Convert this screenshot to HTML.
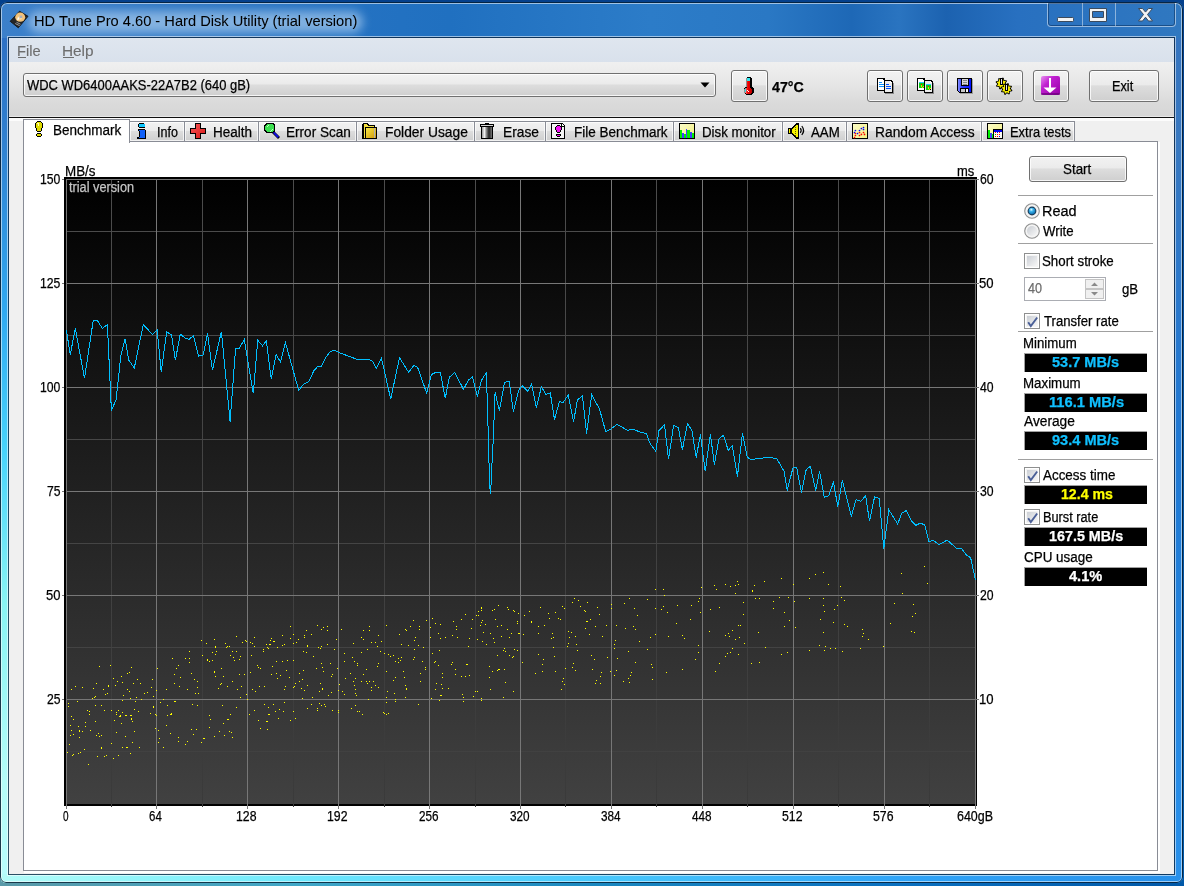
<!DOCTYPE html><html><head><meta charset="utf-8"><style>html,body{margin:0;padding:0}body{width:1184px;height:886px;overflow:hidden;position:relative;background:linear-gradient(#04408c,#02489a 20%,#03529f 50%,#0058a8)}.abs{position:absolute}.t{position:absolute;white-space:nowrap;font-family:"Liberation Sans", sans-serif;-webkit-text-stroke:0.25px currentColor}</style></head><body><div class="abs" style="left:0;top:880px;width:1184px;height:6px;background:linear-gradient(90deg,#5a9aa8 0%,#40a8c8 25%,#1a88c0 50%,#0a70c0 76%,#0058a8 100%)"></div><div class="abs" style="left:0;top:2px;width:1183px;height:881px;border-radius:7px 7px 6px 6px;overflow:hidden"><div class="abs" style="left:0;top:0;width:1183px;height:36px;background:linear-gradient(90deg,#3c80ca 0%,#3078c4 15%,#2472c2 30%,#2070c0 38%,#2c7cc8 55%,#2a78c4 65%,#1e68b6 72%,#2a74c0 76%,#1c62b0 80%,#2870c0 86%,#3078c0 100%)"></div><div class="abs" style="left:0;top:36px;width:9px;height:845px;background:linear-gradient(#2c70c4 0%,#3080d0 12%,#30a8f0 32%,#48d4fc 49%,#88f4f4 67%,#b4fcf8 88%,#b8fcfc 100%)"></div><div class="abs" style="left:1174px;top:36px;width:9px;height:845px;background:linear-gradient(#3474c0 0%,#3878c0 12%,#2a78cc 30%,#1e78d4 49%,#2282dc 70%,#268ce8 88%,#2890ea 100%)"></div><div class="abs" style="left:0;top:872px;width:1183px;height:9px;background:linear-gradient(90deg,#b4fcf8 0%,#90f4fa 12%,#6ee8fc 25%,#48c8fc 50%,#30a4f8 76%,#2890ea 100%)"></div><div class="abs" style="left:28px;top:9px;width:335px;height:22px;border-radius:11px;background:rgba(200,225,250,.55);filter:blur(5px)"></div><div class="abs" style="left:0;top:0;width:1183px;height:881px;box-sizing:border-box;border-radius:7px 7px 6px 6px;border:1px solid rgba(0,22,44,.85);box-shadow:inset 0 0 0 1px rgba(255,255,255,.55)"></div></div><svg class="abs" style="left:6px;top:6px" width="26" height="26" viewBox="0 0 26 26">
<path d="M13.5 5.2L22 10.3 12.3 21.8 4.2 15.3z" fill="#262626" stroke="#111" stroke-width="0.9" stroke-linejoin="round"/>
<ellipse cx="14.2" cy="11.2" rx="5" ry="4.6" fill="#f2c27a"/><ellipse cx="13.4" cy="12.2" rx="2.5" ry="2" fill="#ffe3b0" opacity=".6"/>
<rect x="13.6" y="9.6" width="2.6" height="2.4" fill="#a8b0c0"/>
<path d="M9.2 17.5l4.5 2.2M10.5 16.3l4 1.9" stroke="#9a9a9a" stroke-width="1"/><path d="M11.7 14l1-2.5" stroke="#fff" stroke-width="1.1"/></svg><div class="t" style="left:34.12px;top:13px;font-size:15px;line-height:15px;font-weight:400;color:#000;transform:scaleX(0.9769);transform-origin:0 0;-webkit-text-stroke:0.05px currentColor">HD Tune Pro 4.60 - Hard Disk Utility (trial version)</div><div class="abs" style="left:1047px;top:3px;width:129px;height:24px;box-sizing:border-box;border:1px solid rgba(255,255,255,.5);border-top:none;border-radius:0 0 4px 4px;box-shadow:inset 0 0 0 1px rgba(0,30,70,.45)"></div><div class="abs" style="left:1082px;top:3px;width:1px;height:23px;background:rgba(255,255,255,.45)"></div><div class="abs" style="left:1115px;top:3px;width:1px;height:23px;background:rgba(255,255,255,.45)"></div><svg class="abs" style="left:1047px;top:2px" width="128" height="25" viewBox="0 0 128 25"><rect x="10.5" y="15.5" width="16" height="4" rx=".8" fill="#f4f4f4" stroke="#3c4a5c" stroke-width="1"/><path d="M42.5 6.5h17v13h-17z M45.5 9.5v6h11v-6z" fill="#f4f4f4" fill-rule="evenodd" stroke="#3c4a5c" stroke-width="1"/><path d="M91.5 6.5h4l3 3.6 3-3.6h4l-5 6 5 6.5h-4l-3-3.8-3 3.8h-4l5-6.5z" fill="#f4f4f4" stroke="#3c4a5c" stroke-width="1"/></svg><div class="abs" style="left:7px;top:36px;width:1169px;height:840px;box-sizing:border-box;border:1px solid rgba(255,255,255,.55)"></div><div class="abs" style="left:8px;top:37px;width:1167px;height:838px;box-sizing:border-box;border:1px solid rgba(10,36,64,.8)"></div><div class="abs" style="left:9px;top:38px;width:1165px;height:836px;background:#f0f0f0"></div><div class="abs" style="left:9px;top:38px;width:1165px;height:24px;background:linear-gradient(#dfe6ef,#d9e1ec)"></div><div class="t" style="left:17.02px;top:43px;font-size:15px;line-height:15px;font-weight:400;color:#6d6d6d;transform:scaleX(0.9783);transform-origin:0 0;-webkit-text-stroke:0.1px currentColor">File</div><div class="abs" style="left:18px;top:57px;width:8px;height:1px;background:#6d6d6d"></div><div class="t" style="left:62.28px;top:43px;font-size:15px;line-height:15px;font-weight:400;color:#6d6d6d;transform:scaleX(1.0233);transform-origin:0 0;-webkit-text-stroke:0.1px currentColor">Help</div><div class="abs" style="left:63px;top:57px;width:11px;height:1px;background:#6d6d6d"></div><div class="abs" style="left:9px;top:62px;width:1165px;height:55px;background:linear-gradient(#f0f0f0,#e6e6e6 40%,#dadada 75%,#d6d6d6)"></div><div class="abs" style="left:9px;top:116px;width:1165px;height:1px;background:#e8e8e8"></div><div class="abs" style="left:9px;top:117px;width:1165px;height:1px;background:#111"></div><div class="abs" style="left:9px;top:118px;width:1165px;height:3px;background:#fcfcfc"></div><div class="abs" style="left:23px;top:73px;width:693px;height:24px;box-sizing:border-box;border:1px solid #707070;border-radius:3px;background:linear-gradient(#f2f2f2 0%,#ebebeb 45%,#dddddd 50%,#cfcfcf 100%);box-shadow:inset 0 0 0 1px rgba(255,255,255,.8)"></div><div class="t" style="left:27.10px;top:78px;font-size:14px;line-height:14px;font-weight:400;color:#000;transform:scaleX(0.9249);transform-origin:0 0;">WDC WD6400AAKS-22A7B2 (640 gB)</div><svg class="abs" style="left:700px;top:82px" width="10" height="6" viewBox="0 0 10 6"><path d="M0.5 0.5h9l-4.5 5z" fill="#000"/></svg><div class="abs" style="left:731px;top:70px;width:37px;height:32px;border:1px solid #707070;border-radius:3px;box-sizing:border-box;background:linear-gradient(#f2f2f2 0%,#ebebeb 45%,#dddddd 50%,#cfcfcf 100%);box-shadow:inset 0 0 0 1px rgba(255,255,255,.8)"></div><div class="t" style="left:772.20px;top:80px;font-size:14px;line-height:14px;font-weight:700;color:#000;transform:scaleX(1.0129);transform-origin:0 0;">47°C</div><div class="abs" style="left:867px;top:70px;width:36px;height:32px;border:1px solid #707070;border-radius:3px;box-sizing:border-box;background:linear-gradient(#f2f2f2 0%,#ebebeb 45%,#dddddd 50%,#cfcfcf 100%);box-shadow:inset 0 0 0 1px rgba(255,255,255,.8)"></div><div class="abs" style="left:907px;top:70px;width:36px;height:32px;border:1px solid #707070;border-radius:3px;box-sizing:border-box;background:linear-gradient(#f2f2f2 0%,#ebebeb 45%,#dddddd 50%,#cfcfcf 100%);box-shadow:inset 0 0 0 1px rgba(255,255,255,.8)"></div><div class="abs" style="left:947px;top:70px;width:36px;height:32px;border:1px solid #707070;border-radius:3px;box-sizing:border-box;background:linear-gradient(#f2f2f2 0%,#ebebeb 45%,#dddddd 50%,#cfcfcf 100%);box-shadow:inset 0 0 0 1px rgba(255,255,255,.8)"></div><div class="abs" style="left:987px;top:70px;width:36px;height:32px;border:1px solid #707070;border-radius:3px;box-sizing:border-box;background:linear-gradient(#f2f2f2 0%,#ebebeb 45%,#dddddd 50%,#cfcfcf 100%);box-shadow:inset 0 0 0 1px rgba(255,255,255,.8)"></div><div class="abs" style="left:1033px;top:70px;width:36px;height:32px;border:1px solid #707070;border-radius:3px;box-sizing:border-box;background:linear-gradient(#f2f2f2 0%,#ebebeb 45%,#dddddd 50%,#cfcfcf 100%);box-shadow:inset 0 0 0 1px rgba(255,255,255,.8)"></div><div class="abs" style="left:1089px;top:70px;width:70px;height:32px;border:1px solid #707070;border-radius:3px;box-sizing:border-box;background:linear-gradient(#f2f2f2 0%,#ebebeb 45%,#dddddd 50%,#cfcfcf 100%);box-shadow:inset 0 0 0 1px rgba(255,255,255,.8)"></div><svg class="abs" style="left:0;top:0" width="1184" height="110" viewBox="0 0 1184 110" shape-rendering="crispEdges"><defs><linearGradient id="pg" x1="0" y1="0" x2="1" y2="1"><stop offset="0" stop-color="#e890f0"/><stop offset=".35" stop-color="#c020d0"/><stop offset="1" stop-color="#9800a8"/></linearGradient><linearGradient id="flb" x1="0" y1="0" x2="1" y2="0"><stop offset="0" stop-color="#8890ff"/><stop offset=".3" stop-color="#3040ff"/><stop offset="1" stop-color="#0010ff"/></linearGradient><linearGradient id="thr" x1="0" y1="0" x2="1" y2="0"><stop offset="0" stop-color="#ff9090"/><stop offset=".4" stop-color="#f00000"/><stop offset="1" stop-color="#c00000"/></linearGradient></defs><path d="M747 77h4v1h1v9h1v1h1v5h-1v1h-1v1h-6v-1h-1v-1h-1v-5h1v-1h1v-9h1z" fill="#000"/><path d="M747 78h3v3h-3z" fill="#30e8f0"/><path d="M747 81h3v7h1v1h1v4h-1v1h-5v-1h-1v-4h1v-1h1z" fill="url(#thr)"/><path d="M746 78h1v9h-1zM745 88h1v1h-1zM744 89h1v4h-1z" fill="#909090"/><path d="M745 89h1v3h-1z" fill="#30e8f0"/><path d="M747 90h1v1h1v1h-1v-1h-1z" fill="#fff"/><path d="M877 78h7l1 1v12h-8z" fill="#000"/><path d="M878 79h5v1h1v10h-6z" fill="#fff"/><path d="M884 80h7l2 2v11h-9z" fill="#000"/><path d="M885 81h5v2h2v9h-7z" fill="#ececec"/><path d="M890 81h1v1h1v1h-2z" fill="#fff"/><path d="M893 83h1v11h-9v-1h8z" fill="#555" opacity=".6"/><path d="M879 82h3v1h-3zM879 84h5v1h-5zM879 86h5v1h-5z" fill="#0a90ff"/><path d="M886 84h3v1h-3zM886 86h5v1h-5zM886 88h5v1h-5z" fill="#0050ff"/><path d="M917 78h7l1 1v12h-8z" fill="#000"/><path d="M918 79h5v1h1v10h-6z" fill="#fff"/><path d="M924 80h7l2 2v11h-9z" fill="#000"/><path d="M925 81h5v2h2v9h-7z" fill="#ececec"/><path d="M930 81h1v1h1v1h-2z" fill="#fff"/><path d="M933 83h1v11h-9v-1h8z" fill="#555" opacity=".6"/><path d="M919 82h5v1h-5z" fill="#20c8ff"/><path d="M919 83h5v5h-5z" fill="#10d010"/><path d="M921 84h1v1h-1z" fill="#f00"/><path d="M921 85h1v2h1v-1h1v1h-1v1h-1z" fill="#f0e000"/><path d="M926 84h5v1h-5z" fill="#20c8ff"/><path d="M926 85h5v5h-5z" fill="#10d010"/><path d="M928 86h1v1h-1z" fill="#f00"/><path d="M928 87h1v2h1v-1h1v1h-1v1h-1z" fill="#f0e000"/><path d="M930 89h1v1h-1z" fill="#000"/><path d="M957 78h15v15h-13l-2-2z" fill="#000"/><path d="M958 79h13v13h-12l-1-1z" fill="url(#flb)"/><path d="M961 79h8v7h-8z" fill="#000"/><path d="M962 79h6v6h-6z" fill="#d8d8d8"/><path d="M963 80h4v1h-4zM963 82h4v1h-4zM963 84h4v1h-4z" fill="#888"/><path d="M960 88h9v4h-9z" fill="#000"/><path d="M961 89h4v3h-4z" fill="#c8c8c8"/><path d="M966 89h2v3h-2z" fill="#f4f4f4"/><path d="M972 79h1v15h-13v-1h12z" fill="#666" opacity=".5"/><g shape-rendering="auto"><polygon points="1001.50,78.90 1002.67,77.62 1003.80,77.96 1004.06,79.68 1004.75,80.25 1006.49,80.17 1007.04,81.20 1006.01,82.60 1006.10,83.50 1007.38,84.67 1007.04,85.80 1005.32,86.06 1004.75,86.75 1004.83,88.49 1003.80,89.04 1002.40,88.01 1001.50,88.10 1000.33,89.38 999.20,89.04 998.94,87.32 998.25,86.75 996.51,86.83 995.96,85.80 996.99,84.40 996.90,83.50 995.62,82.33 995.96,81.20 997.68,80.94 998.25,80.25 998.17,78.51 999.20,77.96 1000.60,78.99" fill="#000"/><polygon points="1001.50,80.10 1002.42,78.89 1003.30,79.16 1003.39,80.67 1003.90,81.10 1005.41,80.89 1005.84,81.70 1004.83,82.84 1004.90,83.50 1006.11,84.42 1005.84,85.30 1004.33,85.39 1003.90,85.90 1004.11,87.41 1003.30,87.84 1002.16,86.83 1001.50,86.90 1000.58,88.11 999.70,87.84 999.61,86.33 999.10,85.90 997.59,86.11 997.16,85.30 998.17,84.16 998.10,83.50 996.89,82.58 997.16,81.70 998.67,81.61 999.10,81.10 998.89,79.59 999.70,79.16 1000.84,80.17" fill="#f4ec00"/></g><g shape-rendering="auto"><polygon points="1006.50,84.40 1007.67,83.12 1008.80,83.46 1009.06,85.18 1009.75,85.75 1011.49,85.67 1012.04,86.70 1011.01,88.10 1011.10,89.00 1012.38,90.17 1012.04,91.30 1010.32,91.56 1009.75,92.25 1009.83,93.99 1008.80,94.54 1007.40,93.51 1006.50,93.60 1005.33,94.88 1004.20,94.54 1003.94,92.82 1003.25,92.25 1001.51,92.33 1000.96,91.30 1001.99,89.90 1001.90,89.00 1000.62,87.83 1000.96,86.70 1002.68,86.44 1003.25,85.75 1003.17,84.01 1004.20,83.46 1005.60,84.49" fill="#000"/><polygon points="1006.50,85.60 1007.42,84.39 1008.30,84.66 1008.39,86.17 1008.90,86.60 1010.41,86.39 1010.84,87.20 1009.83,88.34 1009.90,89.00 1011.11,89.92 1010.84,90.80 1009.33,90.89 1008.90,91.40 1009.11,92.91 1008.30,93.34 1007.16,92.33 1006.50,92.40 1005.58,93.61 1004.70,93.34 1004.61,91.83 1004.10,91.40 1002.59,91.61 1002.16,90.80 1003.17,89.66 1003.10,89.00 1001.89,88.08 1002.16,87.20 1003.67,87.11 1004.10,86.60 1003.89,85.09 1004.70,84.66 1005.84,85.67" fill="#f4ec00"/></g><path d="M1000 78h3v7h-3zM1005 83.5h3v7h-3z" fill="#000"/><path d="M1001 79h1v5h-1zM1006 84.5h1v5h-1z" fill="#e0e0ea"/><g shape-rendering="auto"><rect x="1041" y="76" width="19" height="19" rx="2" fill="url(#pg)"/><rect x="1041" y="93" width="19" height="2" rx="1" fill="#600070" opacity=".6"/><path d="M1049 78h2v9.5h5.5l-6.5 5.5-6.5-5.5h5.5z" fill="#fff"/></g></svg><div class="t" style="left:1112.39px;top:79px;font-size:14px;line-height:14px;font-weight:400;color:#000;transform:scaleX(0.9087);transform-origin:0 0;">Exit</div><div class="abs" style="left:23px;top:141px;width:1135px;height:730px;box-sizing:border-box;border:1px solid #898c95;background:#fff"></div><div class="abs" style="left:1158px;top:142px;width:2px;height:731px;background:#fff"></div><div class="abs" style="left:24px;top:871px;width:1136px;height:2px;background:#fff"></div><div class="abs" style="left:129px;top:121px;width:56px;height:21px;box-sizing:border-box;border:1px solid #898c95;background:linear-gradient(#f2f2f2 0%,#ebebeb 45%,#dddddd 50%,#cfcfcf 100%);box-shadow:inset 0 0 0 1px rgba(255,255,255,.7)"></div><div class="t" style="left:156.60px;top:125px;font-size:14px;line-height:14px;font-weight:400;color:#000;transform:scaleX(0.8955);transform-origin:0 0;">Info</div><div class="abs" style="left:184px;top:121px;width:75px;height:21px;box-sizing:border-box;border:1px solid #898c95;background:linear-gradient(#f2f2f2 0%,#ebebeb 45%,#dddddd 50%,#cfcfcf 100%);box-shadow:inset 0 0 0 1px rgba(255,255,255,.7)"></div><div class="t" style="left:212.64px;top:125px;font-size:14px;line-height:14px;font-weight:400;color:#000;transform:scaleX(0.9641);transform-origin:0 0;">Health</div><div class="abs" style="left:258px;top:121px;width:99px;height:21px;box-sizing:border-box;border:1px solid #898c95;background:linear-gradient(#f2f2f2 0%,#ebebeb 45%,#dddddd 50%,#cfcfcf 100%);box-shadow:inset 0 0 0 1px rgba(255,255,255,.7)"></div><div class="t" style="left:286.03px;top:125px;font-size:14px;line-height:14px;font-weight:400;color:#000;transform:scaleX(0.9692);transform-origin:0 0;">Error Scan</div><div class="abs" style="left:356px;top:121px;width:119px;height:21px;box-sizing:border-box;border:1px solid #898c95;background:linear-gradient(#f2f2f2 0%,#ebebeb 45%,#dddddd 50%,#cfcfcf 100%);box-shadow:inset 0 0 0 1px rgba(255,255,255,.7)"></div><div class="t" style="left:384.51px;top:125px;font-size:14px;line-height:14px;font-weight:400;color:#000;transform:scaleX(0.9855);transform-origin:0 0;">Folder Usage</div><div class="abs" style="left:474px;top:121px;width:72px;height:21px;box-sizing:border-box;border:1px solid #898c95;background:linear-gradient(#f2f2f2 0%,#ebebeb 45%,#dddddd 50%,#cfcfcf 100%);box-shadow:inset 0 0 0 1px rgba(255,255,255,.7)"></div><div class="t" style="left:502.62px;top:125px;font-size:14px;line-height:14px;font-weight:400;color:#000;transform:scaleX(0.9829);transform-origin:0 0;">Erase</div><div class="abs" style="left:545px;top:121px;width:129px;height:21px;box-sizing:border-box;border:1px solid #898c95;background:linear-gradient(#f2f2f2 0%,#ebebeb 45%,#dddddd 50%,#cfcfcf 100%);box-shadow:inset 0 0 0 1px rgba(255,255,255,.7)"></div><div class="t" style="left:573.54px;top:125px;font-size:14px;line-height:14px;font-weight:400;color:#000;transform:scaleX(0.9625);transform-origin:0 0;">File Benchmark</div><div class="abs" style="left:673px;top:121px;width:110px;height:21px;box-sizing:border-box;border:1px solid #898c95;background:linear-gradient(#f2f2f2 0%,#ebebeb 45%,#dddddd 50%,#cfcfcf 100%);box-shadow:inset 0 0 0 1px rgba(255,255,255,.7)"></div><div class="t" style="left:701.75px;top:125px;font-size:14px;line-height:14px;font-weight:400;color:#000;transform:scaleX(0.9468);transform-origin:0 0;">Disk monitor</div><div class="abs" style="left:782px;top:121px;width:65px;height:21px;box-sizing:border-box;border:1px solid #898c95;background:linear-gradient(#f2f2f2 0%,#ebebeb 45%,#dddddd 50%,#cfcfcf 100%);box-shadow:inset 0 0 0 1px rgba(255,255,255,.7)"></div><div class="t" style="left:811.30px;top:125px;font-size:14px;line-height:14px;font-weight:400;color:#000;transform:scaleX(0.9467);transform-origin:0 0;">AAM</div><div class="abs" style="left:846px;top:121px;width:136px;height:21px;box-sizing:border-box;border:1px solid #898c95;background:linear-gradient(#f2f2f2 0%,#ebebeb 45%,#dddddd 50%,#cfcfcf 100%);box-shadow:inset 0 0 0 1px rgba(255,255,255,.7)"></div><div class="t" style="left:875.01px;top:125px;font-size:14px;line-height:14px;font-weight:400;color:#000;transform:scaleX(0.9850);transform-origin:0 0;">Random Access</div><div class="abs" style="left:981px;top:121px;width:94px;height:21px;box-sizing:border-box;border:1px solid #898c95;background:linear-gradient(#f2f2f2 0%,#ebebeb 45%,#dddddd 50%,#cfcfcf 100%);box-shadow:inset 0 0 0 1px rgba(255,255,255,.7)"></div><div class="t" style="left:1009.68px;top:125px;font-size:14px;line-height:14px;font-weight:400;color:#000;transform:scaleX(0.9231);transform-origin:0 0;">Extra tests</div><div class="abs" style="left:23px;top:119px;width:107px;height:24px;box-sizing:border-box;border:1px solid #898c95;border-bottom:none;background:#fff"></div><div class="t" style="left:53.44px;top:123px;font-size:14px;line-height:14px;font-weight:400;color:#000;transform:scaleX(0.9643);transform-origin:0 0;">Benchmark</div><svg class="abs" style="left:0;top:0" width="1184" height="150" viewBox="0 0 1184 150" shape-rendering="crispEdges"><defs><linearGradient id="gy" x1="0" y1="0" x2="1" y2="1"><stop offset="0" stop-color="#fbfbc8"/><stop offset="1" stop-color="#f4f080"/></linearGradient><linearGradient id="fold" x1="0" y1="0" x2="1" y2="1"><stop offset="0" stop-color="#f8e848"/><stop offset="1" stop-color="#d09808"/></linearGradient><linearGradient id="blu" x1="0" y1="0" x2="0" y2="1"><stop offset="0" stop-color="#2a8cff"/><stop offset="1" stop-color="#0030e0"/></linearGradient><linearGradient id="red" x1="0" y1="0" x2="1" y2="1"><stop offset="0" stop-color="#f85858"/><stop offset="1" stop-color="#d81818"/></linearGradient><linearGradient id="trash" x1="0" y1="0" x2="1" y2="0"><stop offset="0" stop-color="#9a9a9a"/><stop offset=".25" stop-color="#f0f0f0"/><stop offset=".45" stop-color="#888"/><stop offset=".7" stop-color="#222"/><stop offset="1" stop-color="#777"/></linearGradient></defs><path d="M37 121h1v1h-1zM38 121h1v1h-1zM39 121h1v1h-1zM40 121h1v1h-1zM36 122h1v1h-1zM41 122h1v1h-1zM35 123h1v1h-1zM42 123h1v1h-1zM35 124h1v1h-1zM42 124h1v1h-1zM35 125h1v1h-1zM42 125h1v1h-1zM35 126h1v1h-1zM42 126h1v1h-1zM35 127h1v1h-1zM42 127h1v1h-1zM36 128h1v1h-1zM41 128h1v1h-1zM36 129h1v1h-1zM41 129h1v1h-1zM36 130h1v1h-1zM41 130h1v1h-1zM37 131h1v1h-1zM38 131h1v1h-1zM39 131h1v1h-1zM40 131h1v1h-1zM37 133h1v1h-1zM38 133h1v1h-1zM39 133h1v1h-1zM40 133h1v1h-1zM36 134h1v1h-1zM41 134h1v1h-1zM36 135h1v1h-1zM41 135h1v1h-1zM37 136h1v1h-1zM38 136h1v1h-1zM39 136h1v1h-1zM40 136h1v1h-1z" fill="#000"/><path d="M37 122h1v1h-1zM38 122h1v1h-1zM39 122h1v1h-1zM40 122h1v1h-1zM36 123h1v1h-1zM37 123h1v1h-1zM38 123h1v1h-1zM39 123h1v1h-1zM40 123h1v1h-1zM41 123h1v1h-1zM36 124h1v1h-1zM37 124h1v1h-1zM38 124h1v1h-1zM39 124h1v1h-1zM40 124h1v1h-1zM41 124h1v1h-1zM36 125h1v1h-1zM37 125h1v1h-1zM38 125h1v1h-1zM39 125h1v1h-1zM40 125h1v1h-1zM41 125h1v1h-1zM36 126h1v1h-1zM37 126h1v1h-1zM38 126h1v1h-1zM39 126h1v1h-1zM40 126h1v1h-1zM41 126h1v1h-1zM36 127h1v1h-1zM37 127h1v1h-1zM38 127h1v1h-1zM39 127h1v1h-1zM40 127h1v1h-1zM41 127h1v1h-1zM37 128h1v1h-1zM38 128h1v1h-1zM39 128h1v1h-1zM40 128h1v1h-1zM37 129h1v1h-1zM38 129h1v1h-1zM39 129h1v1h-1zM40 129h1v1h-1zM37 130h1v1h-1zM38 130h1v1h-1zM39 130h1v1h-1zM40 130h1v1h-1zM37 134h1v1h-1zM38 134h1v1h-1zM39 134h1v1h-1zM40 134h1v1h-1zM37 135h1v1h-1zM38 135h1v1h-1zM39 135h1v1h-1zM40 135h1v1h-1z" fill="#e0dc00"/><path d="M37 123h2v3h-1v-2h-1z" fill="#ffffb0"/><path d="M139 123h1v1h-1zM140 123h1v1h-1zM141 123h1v1h-1zM142 123h1v1h-1zM143 123h1v1h-1zM138 124h1v1h-1zM138 125h1v1h-1zM138 126h1v1h-1zM139 127h1v1h-1zM140 127h1v1h-1zM141 127h1v1h-1zM142 127h1v1h-1zM143 127h1v1h-1zM144 127h1v1h-1zM138 129h1v1h-1zM139 129h1v1h-1zM140 129h1v1h-1zM141 129h1v1h-1zM142 129h1v1h-1zM143 129h1v1h-1zM144 129h1v1h-1zM138 130h1v1h-1zM145 130h1v1h-1zM139 131h1v1h-1zM145 131h1v1h-1zM139 132h1v1h-1zM145 132h1v1h-1zM139 133h1v1h-1zM145 133h1v1h-1zM139 134h1v1h-1zM145 134h1v1h-1zM139 135h1v1h-1zM145 135h1v1h-1zM139 136h1v1h-1zM145 136h1v1h-1zM137 137h1v1h-1zM138 137h1v1h-1zM145 137h1v1h-1zM137 138h1v1h-1zM138 138h1v1h-1zM139 138h1v1h-1zM140 138h1v1h-1zM141 138h1v1h-1zM142 138h1v1h-1zM143 138h1v1h-1zM144 138h1v1h-1zM145 138h1v1h-1z" fill="#000"/><path d="M139 124h1v1h-1zM140 124h1v1h-1zM141 124h1v1h-1zM142 124h1v1h-1zM143 124h1v1h-1zM144 124h1v1h-1zM139 125h1v1h-1zM140 125h1v1h-1zM141 125h1v1h-1zM142 125h1v1h-1zM143 125h1v1h-1zM144 125h1v1h-1zM139 126h1v1h-1zM140 126h1v1h-1zM141 126h1v1h-1zM142 126h1v1h-1zM143 126h1v1h-1zM144 126h1v1h-1z" fill="#10c8ff"/><path d="M139 130h1v1h-1zM140 130h1v1h-1zM141 130h1v1h-1zM142 130h1v1h-1zM143 130h1v1h-1zM144 130h1v1h-1zM140 131h1v1h-1zM141 131h1v1h-1zM142 131h1v1h-1zM143 131h1v1h-1zM144 131h1v1h-1zM140 132h1v1h-1zM141 132h1v1h-1zM142 132h1v1h-1zM143 132h1v1h-1zM144 132h1v1h-1zM140 133h1v1h-1zM141 133h1v1h-1zM142 133h1v1h-1zM143 133h1v1h-1zM144 133h1v1h-1zM140 134h1v1h-1zM141 134h1v1h-1zM142 134h1v1h-1zM143 134h1v1h-1zM144 134h1v1h-1zM140 135h1v1h-1zM141 135h1v1h-1zM142 135h1v1h-1zM143 135h1v1h-1zM144 135h1v1h-1zM140 136h1v1h-1zM141 136h1v1h-1zM142 136h1v1h-1zM143 136h1v1h-1zM144 136h1v1h-1zM139 137h1v1h-1zM140 137h1v1h-1zM141 137h1v1h-1zM142 137h1v1h-1zM143 137h1v1h-1zM144 137h1v1h-1z" fill="#1060f8"/><path d="M195 123h6v5h5v6h-5v5h-6v-5h-5v-6h5z" fill="#000"/><path d="M196 124h4v5h5v4h-5v5h-4v-5h-5v-4h5z" fill="url(#red)"/><path d="M266 123h7l2 2v6l-2 2h-7l-2-2v-6z" fill="#000"/><path d="M267 124h5l2 2v4l-2 2h-5l-2-2v-4z" fill="#3ce050"/><path d="M267 126h1v-1h1v1h-1v1h-1z M270 131h1v-1h1v-1h1v1h-1v1h-1v1h-1z" fill="#b8ffb8"/><path d="M272 133l2-2 6 6-2 2z" fill="#000" shape-rendering="auto"/><path d="M273 133l1.2-1.2 4.8 4.8-1.4 1.4z" fill="#1010e0" shape-rendering="auto"/><path d="M363 123h5l1 2h6v2h2v12h-15v-14z" fill="#000"/><path d="M364 124h3l1 2h6v1h-9v11h-1z" fill="#f4e040"/><path d="M365 127h11v11h-11z" fill="#000"/><path d="M366 128h10v10h-10z" fill="url(#fold)"/><path d="M374 128h1v10h-1z" fill="#b0b0b0"/><path d="M485 123h4v1h5v3h-1v12h-12v-12h-1v-3h5z" fill="#000"/><path d="M482 127h10v11h-10z" fill="url(#trash)"/><path d="M481 125h12v1h-12z" fill="#d8d8d8"/><path d="M551 123h11l3 3v13h-14z" fill="#000"/><path d="M552 124h9v3h3v11h-12z" fill="#f4f4f4"/><path d="M562 124l2 2h-2z" fill="#fff"/><path d="M557 125h1v1h-1zM558 125h1v1h-1zM559 125h1v1h-1zM556 126h1v1h-1zM560 126h1v1h-1zM555 127h1v1h-1zM561 127h1v1h-1zM555 128h1v1h-1zM561 128h1v1h-1zM555 129h1v1h-1zM561 129h1v1h-1zM556 130h1v1h-1zM560 130h1v1h-1zM556 131h1v1h-1zM560 131h1v1h-1zM557 132h1v1h-1zM558 132h1v1h-1zM559 132h1v1h-1zM556 134h1v1h-1zM557 134h1v1h-1zM558 134h1v1h-1zM559 134h1v1h-1zM560 134h1v1h-1zM556 135h1v1h-1zM560 135h1v1h-1zM557 136h1v1h-1zM558 136h1v1h-1zM559 136h1v1h-1z" fill="#000"/><path d="M557 126h1v1h-1zM558 126h1v1h-1zM559 126h1v1h-1zM556 127h1v1h-1zM557 127h1v1h-1zM558 127h1v1h-1zM559 127h1v1h-1zM560 127h1v1h-1zM556 128h1v1h-1zM557 128h1v1h-1zM558 128h1v1h-1zM559 128h1v1h-1zM560 128h1v1h-1zM556 129h1v1h-1zM557 129h1v1h-1zM558 129h1v1h-1zM559 129h1v1h-1zM560 129h1v1h-1zM557 130h1v1h-1zM558 130h1v1h-1zM559 130h1v1h-1zM557 131h1v1h-1zM558 131h1v1h-1zM559 131h1v1h-1zM557 135h1v1h-1zM558 135h1v1h-1zM559 135h1v1h-1z" fill="#f010f0"/><path d="M679 123h16v16h-16z" fill="#000"/><path d="M680 124h14v14h-14z" fill="url(#gy)"/><path d="M680 130h2v8h-2zM684 134h2v4h-2zM687 130h3v8h-3zM692 133h2v5h-2z" fill="#00f000"/><path d="M682 133h2v5h-2zM686 129h1v9h-1zM690 132h2v6h-2z" fill="#4040ff"/><path d="M788 128h3l6-5h2v16h-2l-6-5h-3z" fill="#000"/><path d="M789 129h1v4h-1zM792 129l5-4.5h1v12.5h-1l-5-4.5z" fill="#f4f000"/><path d="M795 127h1v1h-1zM795 129h1v1h-1zM795 131h1v1h-1zM795 133h1v1h-1zM795 135h1v1h-1z" fill="#606000"/><path d="M800.3 128.2q1.8 2.3 0 4.6M801.8 126q3.6 4.5 0 9" fill="none" stroke="#000" stroke-width="1.2" shape-rendering="auto"/><path d="M852 123h16v16h-16z" fill="#000"/><path d="M853 124h14v14h-14z" fill="url(#gy)"/><g shape-rendering="auto"><circle cx="855.4" cy="130.5" r=".85" fill="#0000ff"/><circle cx="854.5" cy="132.5" r=".85" fill="#0000ff"/><circle cx="857.5" cy="133.5" r=".85" fill="#0000ff"/><circle cx="859.5" cy="130.5" r=".85" fill="#0000ff"/><circle cx="861.4" cy="128.5" r=".85" fill="#0000ff"/><circle cx="863.5" cy="127.5" r=".85" fill="#0000ff"/><circle cx="863.5" cy="129.5" r=".85" fill="#0000ff"/><circle cx="855.4" cy="133.5" r=".85" fill="#ff0000"/><circle cx="855.4" cy="135.5" r=".85" fill="#ff0000"/><circle cx="859.5" cy="132.5" r=".85" fill="#ff0000"/><circle cx="859.5" cy="135.5" r=".85" fill="#ff0000"/><circle cx="861.4" cy="134.4" r=".85" fill="#ff0000"/><circle cx="863.5" cy="132.5" r=".85" fill="#ff0000"/><circle cx="864.5" cy="134.4" r=".85" fill="#ff0000"/><circle cx="854.5" cy="137.5" r=".85" fill="#ff0000"/></g><path d="M987 123h16v16h-16z" fill="#000"/><path d="M988 124h14v14h-14z" fill="url(#gy)"/><path d="M988 130h2v8h-2zM992 134h1v4h-1z" fill="#00f000"/><path d="M990 133h2v5h-2z" fill="#4040ff"/><path d="M993 129h10v10h-10z" fill="#000"/><path d="M994 130h8v1.5h-8z" fill="#0000f0"/><path d="M994 131.5h8v6.5h-8z" fill="#fafaf0"/><path d="M995 132h1v1h-1zM999 132h1v1h-1zM997 134h1v1h-1zM999 134h1v1h-1zM995 136h1v1h-1zM997 136h1v1h-1z" fill="#ff0000"/><path d="M997 132h1v1h-1zM999 136h1v1h-1z" fill="#0000ff"/><path d="M995 134h1v1h-1z" fill="#00b000"/></svg><svg class="abs" style="left:0;top:0" width="1184" height="886" viewBox="0 0 1184 886" shape-rendering="crispEdges"><defs><linearGradient id="cbg" x1="0" y1="0" x2="0" y2="1"><stop offset="0" stop-color="#000"/><stop offset="1" stop-color="#414141"/></linearGradient><linearGradient id="mv" gradientUnits="userSpaceOnUse" x1="0" y1="179" x2="0" y2="806"><stop offset="0" stop-color="#4c4c4c"/><stop offset=".7" stop-color="#404040"/><stop offset="1" stop-color="#3a3a3a"/></linearGradient></defs><rect x="64" y="177" width="913" height="629" fill="#000"/><rect x="66" y="179" width="910" height="625" fill="url(#cbg)"/><rect x="64" y="804" width="913" height="2" fill="#000"/><rect x="976" y="177" width="1" height="629" fill="#000"/><path d="M111 179v628h1v-628zM202 179v628h1v-628zM293 179v628h1v-628zM384 179v628h1v-628zM475 179v628h1v-628zM565 179v628h1v-628zM656 179v628h1v-628zM747 179v628h1v-628zM838 179v628h1v-628zM929 179v628h1v-628z" fill="url(#mv)"/><rect x="66" y="231" width="910" height="1" fill="#4b4b4b"/><rect x="66" y="335" width="910" height="1" fill="#494949"/><rect x="66" y="439" width="910" height="1" fill="#474747"/><rect x="66" y="543" width="910" height="1" fill="#454545"/><rect x="66" y="647" width="910" height="1" fill="#434343"/><rect x="66" y="751" width="910" height="1" fill="#414141"/><g fill="#777"><rect x="66" y="179" width="1" height="630"/><rect x="156" y="179" width="1" height="630"/><rect x="247" y="179" width="1" height="630"/><rect x="338" y="179" width="1" height="630"/><rect x="429" y="179" width="1" height="630"/><rect x="520" y="179" width="1" height="630"/><rect x="611" y="179" width="1" height="630"/><rect x="702" y="179" width="1" height="630"/><rect x="793" y="179" width="1" height="630"/><rect x="884" y="179" width="1" height="630"/><rect x="975" y="179" width="1" height="630"/><rect x="62" y="179" width="2" height="1"/><rect x="66" y="179" width="913" height="1"/><rect x="62" y="283" width="2" height="1"/><rect x="66" y="283" width="913" height="1"/><rect x="62" y="387" width="2" height="1"/><rect x="66" y="387" width="913" height="1"/><rect x="62" y="491" width="2" height="1"/><rect x="66" y="491" width="913" height="1"/><rect x="62" y="595" width="2" height="1"/><rect x="66" y="595" width="913" height="1"/><rect x="62" y="699" width="2" height="1"/><rect x="66" y="699" width="913" height="1"/></g><path d="M67 752h1v1h-1zM68 703h1v1h-1zM68 706h1v1h-1zM69 744h1v1h-1zM70 725h1v1h-1zM70 735h1v1h-1zM71 689h1v1h-1zM71 716h1v1h-1zM71 730h1v1h-1zM72 755h1v1h-1zM73 719h1v1h-1zM73 734h1v1h-1zM73 754h1v1h-1zM75 686h1v1h-1zM77 701h1v1h-1zM78 726h1v1h-1zM78 753h1v1h-1zM79 730h1v1h-1zM79 731h1v1h-1zM79 737h1v1h-1zM80 752h1v1h-1zM82 687h1v1h-1zM82 731h1v1h-1zM84 749h1v1h-1zM85 722h1v1h-1zM85 726h1v1h-1zM87 710h1v1h-1zM88 764h1v1h-1zM89 711h1v1h-1zM89 714h1v1h-1zM90 730h1v1h-1zM92 698h1v1h-1zM93 688h1v1h-1zM94 697h1v1h-1zM95 696h1v1h-1zM95 705h1v1h-1zM95 721h1v1h-1zM96 683h1v1h-1zM96 735h1v1h-1zM97 756h1v1h-1zM98 733h1v1h-1zM99 666h1v1h-1zM99 736h1v1h-1zM101 705h1v1h-1zM101 735h1v1h-1zM101 747h1v1h-1zM101 748h1v1h-1zM103 689h1v1h-1zM104 710h1v1h-1zM104 756h1v1h-1zM105 694h1v1h-1zM106 755h1v1h-1zM107 693h1v1h-1zM108 685h1v1h-1zM108 686h1v1h-1zM110 665h1v1h-1zM111 710h1v1h-1zM111 743h1v1h-1zM113 678h1v1h-1zM113 758h1v1h-1zM114 720h1v1h-1zM115 685h1v1h-1zM116 712h1v1h-1zM116 714h1v1h-1zM116 732h1v1h-1zM117 681h1v1h-1zM118 710h1v1h-1zM118 755h1v1h-1zM119 716h1v1h-1zM120 715h1v1h-1zM120 716h1v1h-1zM121 676h1v1h-1zM121 723h1v1h-1zM122 682h1v1h-1zM122 700h1v1h-1zM122 712h1v1h-1zM122 747h1v1h-1zM123 695h1v1h-1zM125 715h1v1h-1zM125 736h1v1h-1zM126 715h1v1h-1zM126 747h1v1h-1zM127 673h1v1h-1zM127 689h1v1h-1zM127 747h1v1h-1zM129 672h1v1h-1zM129 691h1v1h-1zM130 698h1v1h-1zM130 715h1v1h-1zM130 753h1v1h-1zM131 667h1v1h-1zM131 715h1v1h-1zM131 718h1v1h-1zM131 719h1v1h-1zM132 721h1v1h-1zM132 742h1v1h-1zM133 683h1v1h-1zM134 709h1v1h-1zM134 731h1v1h-1zM135 701h1v1h-1zM136 697h1v1h-1zM137 679h1v1h-1zM138 711h1v1h-1zM139 747h1v1h-1zM140 683h1v1h-1zM141 699h1v1h-1zM144 693h1v1h-1zM147 692h1v1h-1zM150 713h1v1h-1zM151 687h1v1h-1zM152 679h1v1h-1zM153 696h1v1h-1zM153 706h1v1h-1zM153 707h1v1h-1zM155 714h1v1h-1zM155 728h1v1h-1zM156 690h1v1h-1zM156 715h1v1h-1zM157 668h1v1h-1zM158 730h1v1h-1zM158 742h1v1h-1zM159 738h1v1h-1zM160 702h1v1h-1zM163 699h1v1h-1zM163 747h1v1h-1zM166 689h1v1h-1zM166 725h1v1h-1zM167 705h1v1h-1zM167 715h1v1h-1zM170 714h1v1h-1zM170 733h1v1h-1zM171 713h1v1h-1zM171 714h1v1h-1zM172 658h1v1h-1zM174 674h1v1h-1zM174 683h1v1h-1zM174 701h1v1h-1zM175 701h1v1h-1zM176 668h1v1h-1zM178 665h1v1h-1zM178 737h1v1h-1zM178 741h1v1h-1zM179 686h1v1h-1zM180 677h1v1h-1zM185 658h1v1h-1zM185 744h1v1h-1zM187 689h1v1h-1zM187 741h1v1h-1zM189 651h1v1h-1zM189 658h1v1h-1zM189 662h1v1h-1zM191 673h1v1h-1zM191 729h1v1h-1zM192 704h1v1h-1zM193 734h1v1h-1zM194 679h1v1h-1zM195 693h1v1h-1zM196 729h1v1h-1zM197 681h1v1h-1zM197 687h1v1h-1zM197 705h1v1h-1zM198 693h1v1h-1zM201 640h1v1h-1zM201 742h1v1h-1zM202 655h1v1h-1zM203 738h1v1h-1zM204 738h1v1h-1zM206 643h1v1h-1zM207 659h1v1h-1zM207 660h1v1h-1zM209 661h1v1h-1zM209 715h1v1h-1zM209 727h1v1h-1zM210 719h1v1h-1zM212 652h1v1h-1zM212 660h1v1h-1zM214 639h1v1h-1zM214 671h1v1h-1zM214 672h1v1h-1zM214 736h1v1h-1zM215 646h1v1h-1zM215 647h1v1h-1zM215 654h1v1h-1zM215 676h1v1h-1zM216 651h1v1h-1zM218 688h1v1h-1zM219 731h1v1h-1zM220 684h1v1h-1zM221 668h1v1h-1zM221 683h1v1h-1zM222 705h1v1h-1zM223 676h1v1h-1zM223 723h1v1h-1zM224 735h1v1h-1zM225 643h1v1h-1zM226 647h1v1h-1zM227 646h1v1h-1zM227 686h1v1h-1zM227 719h1v1h-1zM228 719h1v1h-1zM229 646h1v1h-1zM229 731h1v1h-1zM230 655h1v1h-1zM230 714h1v1h-1zM231 732h1v1h-1zM232 651h1v1h-1zM232 681h1v1h-1zM232 737h1v1h-1zM233 657h1v1h-1zM234 660h1v1h-1zM236 636h1v1h-1zM236 651h1v1h-1zM236 707h1v1h-1zM237 689h1v1h-1zM239 659h1v1h-1zM239 674h1v1h-1zM240 656h1v1h-1zM240 697h1v1h-1zM241 686h1v1h-1zM242 642h1v1h-1zM244 674h1v1h-1zM245 640h1v1h-1zM246 641h1v1h-1zM246 694h1v1h-1zM247 699h1v1h-1zM249 714h1v1h-1zM250 642h1v1h-1zM250 672h1v1h-1zM251 655h1v1h-1zM252 643h1v1h-1zM252 689h1v1h-1zM254 637h1v1h-1zM254 646h1v1h-1zM254 710h1v1h-1zM255 691h1v1h-1zM257 665h1v1h-1zM258 667h1v1h-1zM258 720h1v1h-1zM259 686h1v1h-1zM260 668h1v1h-1zM260 728h1v1h-1zM263 649h1v1h-1zM263 651h1v1h-1zM264 686h1v1h-1zM264 704h1v1h-1zM266 644h1v1h-1zM266 721h1v1h-1zM267 647h1v1h-1zM267 721h1v1h-1zM267 729h1v1h-1zM268 648h1v1h-1zM268 707h1v1h-1zM268 714h1v1h-1zM269 644h1v1h-1zM269 714h1v1h-1zM270 640h1v1h-1zM270 644h1v1h-1zM271 638h1v1h-1zM271 674h1v1h-1zM272 666h1v1h-1zM273 641h1v1h-1zM273 704h1v1h-1zM274 641h1v1h-1zM275 711h1v1h-1zM276 661h1v1h-1zM276 673h1v1h-1zM277 647h1v1h-1zM277 678h1v1h-1zM278 718h1v1h-1zM279 709h1v1h-1zM280 675h1v1h-1zM282 635h1v1h-1zM282 645h1v1h-1zM282 661h1v1h-1zM283 711h1v1h-1zM284 644h1v1h-1zM284 689h1v1h-1zM284 702h1v1h-1zM285 686h1v1h-1zM286 670h1v1h-1zM287 660h1v1h-1zM289 677h1v1h-1zM290 626h1v1h-1zM290 638h1v1h-1zM290 720h1v1h-1zM293 634h1v1h-1zM293 643h1v1h-1zM293 660h1v1h-1zM293 687h1v1h-1zM293 711h1v1h-1zM294 686h1v1h-1zM295 683h1v1h-1zM295 718h1v1h-1zM296 642h1v1h-1zM298 639h1v1h-1zM299 673h1v1h-1zM299 681h1v1h-1zM301 688h1v1h-1zM302 679h1v1h-1zM302 698h1v1h-1zM303 651h1v1h-1zM303 670h1v1h-1zM304 635h1v1h-1zM304 637h1v1h-1zM304 690h1v1h-1zM306 630h1v1h-1zM306 652h1v1h-1zM307 645h1v1h-1zM307 646h1v1h-1zM307 685h1v1h-1zM307 708h1v1h-1zM311 634h1v1h-1zM311 704h1v1h-1zM312 697h1v1h-1zM313 656h1v1h-1zM316 668h1v1h-1zM317 625h1v1h-1zM317 708h1v1h-1zM317 710h1v1h-1zM318 647h1v1h-1zM319 691h1v1h-1zM319 703h1v1h-1zM320 648h1v1h-1zM320 683h1v1h-1zM321 629h1v1h-1zM321 646h1v1h-1zM321 663h1v1h-1zM321 705h1v1h-1zM322 667h1v1h-1zM322 688h1v1h-1zM322 689h1v1h-1zM323 627h1v1h-1zM323 671h1v1h-1zM324 704h1v1h-1zM325 706h1v1h-1zM327 626h1v1h-1zM327 630h1v1h-1zM327 644h1v1h-1zM328 695h1v1h-1zM330 663h1v1h-1zM331 676h1v1h-1zM331 692h1v1h-1zM332 674h1v1h-1zM332 710h1v1h-1zM334 649h1v1h-1zM336 639h1v1h-1zM337 668h1v1h-1zM338 690h1v1h-1zM338 710h1v1h-1zM338 712h1v1h-1zM339 684h1v1h-1zM341 629h1v1h-1zM342 691h1v1h-1zM344 653h1v1h-1zM344 661h1v1h-1zM344 694h1v1h-1zM345 678h1v1h-1zM350 673h1v1h-1zM351 708h1v1h-1zM352 657h1v1h-1zM353 643h1v1h-1zM353 681h1v1h-1zM354 661h1v1h-1zM354 685h1v1h-1zM355 678h1v1h-1zM355 689h1v1h-1zM355 693h1v1h-1zM355 705h1v1h-1zM356 695h1v1h-1zM357 663h1v1h-1zM357 665h1v1h-1zM357 711h1v1h-1zM359 711h1v1h-1zM361 637h1v1h-1zM361 652h1v1h-1zM361 681h1v1h-1zM362 714h1v1h-1zM363 630h1v1h-1zM363 639h1v1h-1zM363 674h1v1h-1zM366 669h1v1h-1zM366 681h1v1h-1zM367 649h1v1h-1zM367 683h1v1h-1zM368 699h1v1h-1zM369 626h1v1h-1zM369 630h1v1h-1zM369 681h1v1h-1zM371 642h1v1h-1zM371 687h1v1h-1zM371 690h1v1h-1zM373 681h1v1h-1zM375 642h1v1h-1zM375 685h1v1h-1zM377 646h1v1h-1zM377 666h1v1h-1zM378 635h1v1h-1zM378 663h1v1h-1zM378 687h1v1h-1zM380 651h1v1h-1zM381 641h1v1h-1zM383 712h1v1h-1zM384 653h1v1h-1zM384 713h1v1h-1zM386 625h1v1h-1zM386 671h1v1h-1zM386 697h1v1h-1zM386 702h1v1h-1zM386 714h1v1h-1zM387 691h1v1h-1zM388 654h1v1h-1zM388 713h1v1h-1zM390 656h1v1h-1zM393 655h1v1h-1zM393 680h1v1h-1zM394 693h1v1h-1zM395 661h1v1h-1zM395 677h1v1h-1zM395 699h1v1h-1zM395 701h1v1h-1zM398 658h1v1h-1zM398 662h1v1h-1zM399 634h1v1h-1zM400 660h1v1h-1zM401 644h1v1h-1zM401 657h1v1h-1zM403 671h1v1h-1zM404 677h1v1h-1zM405 629h1v1h-1zM405 685h1v1h-1zM405 697h1v1h-1zM406 630h1v1h-1zM406 688h1v1h-1zM406 689h1v1h-1zM408 645h1v1h-1zM410 626h1v1h-1zM413 620h1v1h-1zM413 659h1v1h-1zM414 640h1v1h-1zM414 649h1v1h-1zM414 657h1v1h-1zM415 637h1v1h-1zM418 645h1v1h-1zM418 704h1v1h-1zM419 626h1v1h-1zM419 629h1v1h-1zM420 673h1v1h-1zM420 681h1v1h-1zM422 661h1v1h-1zM423 647h1v1h-1zM425 667h1v1h-1zM425 669h1v1h-1zM426 620h1v1h-1zM430 627h1v1h-1zM430 637h1v1h-1zM431 698h1v1h-1zM432 618h1v1h-1zM432 653h1v1h-1zM434 662h1v1h-1zM435 623h1v1h-1zM435 661h1v1h-1zM435 689h1v1h-1zM436 683h1v1h-1zM438 633h1v1h-1zM438 665h1v1h-1zM439 650h1v1h-1zM439 700h1v1h-1zM440 624h1v1h-1zM440 638h1v1h-1zM440 695h1v1h-1zM441 684h1v1h-1zM441 695h1v1h-1zM442 673h1v1h-1zM442 677h1v1h-1zM442 688h1v1h-1zM445 637h1v1h-1zM448 688h1v1h-1zM451 664h1v1h-1zM452 635h1v1h-1zM452 662h1v1h-1zM453 621h1v1h-1zM455 669h1v1h-1zM455 674h1v1h-1zM456 626h1v1h-1zM456 629h1v1h-1zM457 637h1v1h-1zM461 619h1v1h-1zM461 676h1v1h-1zM462 694h1v1h-1zM463 697h1v1h-1zM463 701h1v1h-1zM465 614h1v1h-1zM465 676h1v1h-1zM466 664h1v1h-1zM467 664h1v1h-1zM468 646h1v1h-1zM469 638h1v1h-1zM469 675h1v1h-1zM471 628h1v1h-1zM472 619h1v1h-1zM473 696h1v1h-1zM475 691h1v1h-1zM476 615h1v1h-1zM477 639h1v1h-1zM477 691h1v1h-1zM478 611h1v1h-1zM478 615h1v1h-1zM480 625h1v1h-1zM481 607h1v1h-1zM481 608h1v1h-1zM481 610h1v1h-1zM481 622h1v1h-1zM481 698h1v1h-1zM481 700h1v1h-1zM482 620h1v1h-1zM482 641h1v1h-1zM483 632h1v1h-1zM485 624h1v1h-1zM486 644h1v1h-1zM489 666h1v1h-1zM489 677h1v1h-1zM490 633h1v1h-1zM490 689h1v1h-1zM492 610h1v1h-1zM492 671h1v1h-1zM493 638h1v1h-1zM494 609h1v1h-1zM494 642h1v1h-1zM495 619h1v1h-1zM497 626h1v1h-1zM497 655h1v1h-1zM497 670h1v1h-1zM498 605h1v1h-1zM498 669h1v1h-1zM499 669h1v1h-1zM501 625h1v1h-1zM501 636h1v1h-1zM503 650h1v1h-1zM503 697h1v1h-1zM504 648h1v1h-1zM504 669h1v1h-1zM505 651h1v1h-1zM505 682h1v1h-1zM507 607h1v1h-1zM507 629h1v1h-1zM508 609h1v1h-1zM509 637h1v1h-1zM509 655h1v1h-1zM511 633h1v1h-1zM512 657h1v1h-1zM513 610h1v1h-1zM513 656h1v1h-1zM513 691h1v1h-1zM514 611h1v1h-1zM514 649h1v1h-1zM517 621h1v1h-1zM517 623h1v1h-1zM517 650h1v1h-1zM518 613h1v1h-1zM518 633h1v1h-1zM519 633h1v1h-1zM522 662h1v1h-1zM523 634h1v1h-1zM524 615h1v1h-1zM529 611h1v1h-1zM531 621h1v1h-1zM531 622h1v1h-1zM535 673h1v1h-1zM538 626h1v1h-1zM538 633h1v1h-1zM538 654h1v1h-1zM540 607h1v1h-1zM542 664h1v1h-1zM542 671h1v1h-1zM543 659h1v1h-1zM544 625h1v1h-1zM548 613h1v1h-1zM549 618h1v1h-1zM551 638h1v1h-1zM552 633h1v1h-1zM553 637h1v1h-1zM553 647h1v1h-1zM554 656h1v1h-1zM555 612h1v1h-1zM555 671h1v1h-1zM558 618h1v1h-1zM560 619h1v1h-1zM561 689h1v1h-1zM562 606h1v1h-1zM562 681h1v1h-1zM563 678h1v1h-1zM564 608h1v1h-1zM564 684h1v1h-1zM565 668h1v1h-1zM567 646h1v1h-1zM568 631h1v1h-1zM568 643h1v1h-1zM569 637h1v1h-1zM571 632h1v1h-1zM572 602h1v1h-1zM572 667h1v1h-1zM573 663h1v1h-1zM574 598h1v1h-1zM575 636h1v1h-1zM575 670h1v1h-1zM576 644h1v1h-1zM577 650h1v1h-1zM578 600h1v1h-1zM580 606h1v1h-1zM584 610h1v1h-1zM585 611h1v1h-1zM585 628h1v1h-1zM586 621h1v1h-1zM587 602h1v1h-1zM587 621h1v1h-1zM589 634h1v1h-1zM590 619h1v1h-1zM591 655h1v1h-1zM592 669h1v1h-1zM594 659h1v1h-1zM595 626h1v1h-1zM595 683h1v1h-1zM596 680h1v1h-1zM597 607h1v1h-1zM599 614h1v1h-1zM600 676h1v1h-1zM600 683h1v1h-1zM601 672h1v1h-1zM602 636h1v1h-1zM606 625h1v1h-1zM607 657h1v1h-1zM610 671h1v1h-1zM611 604h1v1h-1zM611 608h1v1h-1zM614 644h1v1h-1zM614 648h1v1h-1zM614 675h1v1h-1zM615 640h1v1h-1zM616 625h1v1h-1zM616 670h1v1h-1zM617 658h1v1h-1zM623 681h1v1h-1zM624 603h1v1h-1zM625 628h1v1h-1zM628 651h1v1h-1zM628 678h1v1h-1zM629 598h1v1h-1zM629 682h1v1h-1zM630 675h1v1h-1zM631 672h1v1h-1zM633 626h1v1h-1zM634 608h1v1h-1zM635 629h1v1h-1zM635 662h1v1h-1zM637 615h1v1h-1zM639 641h1v1h-1zM647 599h1v1h-1zM647 649h1v1h-1zM650 637h1v1h-1zM651 664h1v1h-1zM652 667h1v1h-1zM652 679h1v1h-1zM655 589h1v1h-1zM655 608h1v1h-1zM655 634h1v1h-1zM661 609h1v1h-1zM663 589h1v1h-1zM663 606h1v1h-1zM664 595h1v1h-1zM666 672h1v1h-1zM667 612h1v1h-1zM668 636h1v1h-1zM676 623h1v1h-1zM677 605h1v1h-1zM682 635h1v1h-1zM682 669h1v1h-1zM684 638h1v1h-1zM690 619h1v1h-1zM691 605h1v1h-1zM695 659h1v1h-1zM698 601h1v1h-1zM698 645h1v1h-1zM698 652h1v1h-1zM699 598h1v1h-1zM700 612h1v1h-1zM701 587h1v1h-1zM709 631h1v1h-1zM710 609h1v1h-1zM714 585h1v1h-1zM715 671h1v1h-1zM716 589h1v1h-1zM719 607h1v1h-1zM719 663h1v1h-1zM725 584h1v1h-1zM725 635h1v1h-1zM725 656h1v1h-1zM727 653h1v1h-1zM728 633h1v1h-1zM729 636h1v1h-1zM730 586h1v1h-1zM730 652h1v1h-1zM732 630h1v1h-1zM732 648h1v1h-1zM735 585h1v1h-1zM735 593h1v1h-1zM735 639h1v1h-1zM737 581h1v1h-1zM738 584h1v1h-1zM738 625h1v1h-1zM738 654h1v1h-1zM739 637h1v1h-1zM740 625h1v1h-1zM743 602h1v1h-1zM743 614h1v1h-1zM744 643h1v1h-1zM751 663h1v1h-1zM752 590h1v1h-1zM752 591h1v1h-1zM754 585h1v1h-1zM755 598h1v1h-1zM758 632h1v1h-1zM759 598h1v1h-1zM759 662h1v1h-1zM764 581h1v1h-1zM765 647h1v1h-1zM773 601h1v1h-1zM773 608h1v1h-1zM779 597h1v1h-1zM781 578h1v1h-1zM781 654h1v1h-1zM784 612h1v1h-1zM784 626h1v1h-1zM787 652h1v1h-1zM788 597h1v1h-1zM789 620h1v1h-1zM793 584h1v1h-1zM794 601h1v1h-1zM795 627h1v1h-1zM809 578h1v1h-1zM809 598h1v1h-1zM809 650h1v1h-1zM815 574h1v1h-1zM819 645h1v1h-1zM820 619h1v1h-1zM823 572h1v1h-1zM823 598h1v1h-1zM823 605h1v1h-1zM823 632h1v1h-1zM824 611h1v1h-1zM824 650h1v1h-1zM825 646h1v1h-1zM828 584h1v1h-1zM830 648h1v1h-1zM833 622h1v1h-1zM834 609h1v1h-1zM835 648h1v1h-1zM837 605h1v1h-1zM840 586h1v1h-1zM841 597h1v1h-1zM842 651h1v1h-1zM844 600h1v1h-1zM844 624h1v1h-1zM847 626h1v1h-1zM860 648h1v1h-1zM862 629h1v1h-1zM862 636h1v1h-1zM863 633h1v1h-1zM868 639h1v1h-1zM883 646h1v1h-1zM890 623h1v1h-1zM894 603h1v1h-1zM901 573h1v1h-1zM902 593h1v1h-1zM911 631h1v1h-1zM912 616h1v1h-1zM913 604h1v1h-1zM914 632h1v1h-1zM915 613h1v1h-1zM924 566h1v1h-1zM927 583h1v1h-1z" fill="#ffff00"/><polyline points="66.3,330.0 70.3,354.5 75.3,328.5 84.5,378.3 93.2,320.6 97.2,320.2 102.4,328.5 107.4,324.5 111.4,410.7 116.1,399.6 120.9,355.3 125.1,338.7 128.8,360.1 134.3,368.0 143.3,324.5 152.5,334.5 157.2,330.0 161.2,371.9 166.7,331.6 171.5,335.1 175.4,360.1 180.3,334.0 185.0,338.0 189.0,339.5 193.4,335.6 198.5,356.1 203.2,355.0 207.5,333.2 212.4,370.4 221.4,331.6 230.1,421.7 235.6,348.2 238.8,349.0 244.3,339.5 253.3,393.3 257.7,340.3 262.5,345.8 266.4,340.8 271.2,379.0 276.2,354.5 280.4,362.0 285.4,342.4 298.7,390.4 303.7,384.0 308.5,381.7 314.0,370.6 318.0,366.2 321.4,366.2 325.8,357.2 330.3,351.6 334.5,350.4 340.1,352.9 348.0,356.0 356.7,359.2 369.3,359.5 372.5,361.4 376.4,368.2 381.5,358.3 390.7,399.0 399.5,357.7 408.7,372.4 414.0,365.1 417.7,367.6 426.7,393.2 431.4,374.6 435.8,372.4 440.3,372.4 445.3,398.3 449.3,377.4 454.5,372.4 463.5,389.3 468.3,380.3 472.5,376.6 477.3,396.4 481.4,380.3 486.4,372.7 487.8,418.0 488.6,447.4 489.4,477.9 490.3,493.7 491.2,482.4 492.0,463.2 493.1,442.9 493.9,423.1 494.6,403.4 495.1,392.5 499.4,410.6 504.6,382.2 509.2,381.3 513.4,411.7 518.7,390.3 522.1,385.6 527.7,391.4 531.6,384.0 536.4,407.7 541.4,386.7 545.8,394.3 550.3,393.0 554.5,419.6 559.3,401.9 563.2,402.2 568.3,395.1 573.5,421.9 577.5,399.8 582.5,395.8 586.6,433.5 591.7,394.6 599.6,409.3 605.6,431.4 609.9,429.8 617.1,424.3 627.4,430.3 632.9,429.3 640.8,432.2 646.4,433.8 650.3,444.0 655.8,451.1 659.0,430.6 664.5,424.6 668.5,459.4 673.6,425.5 678.3,427.4 682.4,449.6 687.5,423.5 691.9,430.3 696.2,457.5 700.4,434.5 705.2,471.4 710.4,433.8 714.3,464.6 719.1,438.5 723.5,435.3 728.2,450.3 732.3,445.8 737.4,476.7 742.5,433.2 747.2,457.2 750.8,459.3 757.9,458.8 769.0,457.2 776.9,458.8 784.0,471.1 787.2,490.4 793.0,467.7 796.7,467.7 801.4,492.5 806.2,469.6 810.4,466.4 815.7,490.4 819.6,471.5 824.3,497.2 828.8,495.7 833.5,482.2 837.8,506.7 842.3,480.6 851.3,516.1 856.1,499.5 860.8,501.4 865.6,495.6 869.5,521.3 874.6,496.7 879.3,498.7 883.8,548.5 888.8,509.8 897.7,524.0 901.9,513.0 906.2,510.6 911.3,520.9 915.8,525.4 920.3,523.1 924.6,524.8 929.1,541.8 933.0,540.1 939.0,544.6 947.2,540.1 956.5,548.3 961.5,548.3 966.1,554.8 970.6,557.6 975.4,579.6" fill="none" stroke="#00bfff" stroke-width="1" shape-rendering="crispEdges"/></svg><div class="t" style="left:65.44px;top:164px;font-size:14px;line-height:14px;font-weight:400;color:#000;transform:scaleX(0.9581);transform-origin:0 0;">MB/s</div><div class="t" style="left:956.67px;top:164px;font-size:14px;line-height:14px;font-weight:400;color:#000;transform:scaleX(0.9278);transform-origin:0 0;">ms</div><div class="t" style="left:68.80px;top:180px;font-size:14px;line-height:14px;font-weight:400;color:#c4c4c4;transform:scaleX(0.9085);transform-origin:0 0;">trial version</div><div class="t" style="left:40.13px;top:172px;font-size:14px;line-height:14px;font-weight:400;color:#000;transform:scaleX(0.8727);transform-origin:0 0;">150</div><div class="t" style="left:40.13px;top:276px;font-size:14px;line-height:14px;font-weight:400;color:#000;transform:scaleX(0.8727);transform-origin:0 0;">125</div><div class="t" style="left:40.13px;top:380px;font-size:14px;line-height:14px;font-weight:400;color:#000;transform:scaleX(0.8727);transform-origin:0 0;">100</div><div class="t" style="left:47.20px;top:484px;font-size:14px;line-height:14px;font-weight:400;color:#000;transform:scaleX(0.8667);transform-origin:0 0;">75</div><div class="t" style="left:46.27px;top:588px;font-size:14px;line-height:14px;font-weight:400;color:#000;transform:scaleX(0.9286);transform-origin:0 0;">50</div><div class="t" style="left:47.20px;top:692px;font-size:14px;line-height:14px;font-weight:400;color:#000;transform:scaleX(0.8667);transform-origin:0 0;">25</div><div class="t" style="left:980.40px;top:172px;font-size:14px;line-height:14px;font-weight:400;color:#000;transform:scaleX(0.8733);transform-origin:0 0;">60</div><div class="t" style="left:979.46px;top:276px;font-size:14px;line-height:14px;font-weight:400;color:#000;transform:scaleX(0.9357);transform-origin:0 0;">50</div><div class="t" style="left:980.40px;top:380px;font-size:14px;line-height:14px;font-weight:400;color:#000;transform:scaleX(0.8733);transform-origin:0 0;">40</div><div class="t" style="left:980.40px;top:484px;font-size:14px;line-height:14px;font-weight:400;color:#000;transform:scaleX(0.8733);transform-origin:0 0;">30</div><div class="t" style="left:980.40px;top:588px;font-size:14px;line-height:14px;font-weight:400;color:#000;transform:scaleX(0.8733);transform-origin:0 0;">20</div><div class="t" style="left:979.46px;top:692px;font-size:14px;line-height:14px;font-weight:400;color:#000;transform:scaleX(0.9357);transform-origin:0 0;">10</div><div class="t" style="left:63.15px;top:809px;font-size:14px;line-height:14px;font-weight:400;color:#000;transform:scaleX(0.7125);transform-origin:0 0;">0</div><div class="t" style="left:149.45px;top:809px;font-size:14px;line-height:14px;font-weight:400;color:#000;transform:scaleX(0.8188);transform-origin:0 0;">64</div><div class="t" style="left:236.47px;top:809px;font-size:14px;line-height:14px;font-weight:400;color:#000;transform:scaleX(0.8773);transform-origin:0 0;">128</div><div class="t" style="left:327.47px;top:809px;font-size:14px;line-height:14px;font-weight:400;color:#000;transform:scaleX(0.8773);transform-origin:0 0;">192</div><div class="t" style="left:419.35px;top:809px;font-size:14px;line-height:14px;font-weight:400;color:#000;transform:scaleX(0.8391);transform-origin:0 0;">256</div><div class="t" style="left:510.35px;top:809px;font-size:14px;line-height:14px;font-weight:400;color:#000;transform:scaleX(0.8391);transform-origin:0 0;">320</div><div class="t" style="left:601.35px;top:809px;font-size:14px;line-height:14px;font-weight:400;color:#000;transform:scaleX(0.8391);transform-origin:0 0;">384</div><div class="t" style="left:692.35px;top:809px;font-size:14px;line-height:14px;font-weight:400;color:#000;transform:scaleX(0.8391);transform-origin:0 0;">448</div><div class="t" style="left:782.47px;top:809px;font-size:14px;line-height:14px;font-weight:400;color:#000;transform:scaleX(0.8773);transform-origin:0 0;">512</div><div class="t" style="left:873.47px;top:809px;font-size:14px;line-height:14px;font-weight:400;color:#000;transform:scaleX(0.8773);transform-origin:0 0;">576</div><div class="t" style="left:956.80px;top:809px;font-size:14px;line-height:14px;font-weight:400;color:#000;transform:scaleX(0.8900);transform-origin:0 0;">640gB</div><div class="abs" style="left:1029px;top:156px;width:98px;height:26px;border:1px solid #707070;border-radius:3px;box-sizing:border-box;background:linear-gradient(#f2f2f2 0%,#ebebeb 45%,#dddddd 50%,#cfcfcf 100%);box-shadow:inset 0 0 0 1px rgba(255,255,255,.8)"></div><div class="t" style="left:1063.24px;top:162px;font-size:14px;line-height:14px;font-weight:400;color:#000;transform:scaleX(0.9552);transform-origin:0 0;">Start</div><div class="abs" style="left:1018px;top:195px;width:135px;height:1px;background:#a0a0a0"></div><div class="abs" style="left:1018px;top:243px;width:135px;height:1px;background:#a0a0a0"></div><div class="abs" style="left:1018px;top:331px;width:135px;height:1px;background:#a0a0a0"></div><div class="abs" style="left:1018px;top:459px;width:135px;height:1px;background:#a0a0a0"></div><svg class="abs" style="left:1024px;top:203px" width="16" height="16" viewBox="0 0 16 16"><defs><radialGradient id="rg" cx=".4" cy=".3" r=".75"><stop offset="0" stop-color="#f0fcff"/><stop offset=".35" stop-color="#40b8f0"/><stop offset="1" stop-color="#0868a8"/></radialGradient><linearGradient id="rg2" x1="0" y1="0" x2="1" y2="1"><stop offset="0" stop-color="#c8ccd2"/><stop offset="1" stop-color="#f8f8f8"/></linearGradient></defs><circle cx="8" cy="8" r="7.3" fill="#f4f4f4" stroke="#8e8f8f" stroke-width="1.1"/><circle cx="8" cy="8" r="4.4" fill="#1c3c58"/><circle cx="8" cy="8" r="3.3" fill="url(#rg)"/></svg><div class="t" style="left:1042.47px;top:204px;font-size:14px;line-height:14px;font-weight:400;color:#000;transform:scaleX(1.0312);transform-origin:0 0;">Read</div><svg class="abs" style="left:1024px;top:223px" width="16" height="16" viewBox="0 0 16 16"><defs><radialGradient id="rg" cx=".4" cy=".3" r=".75"><stop offset="0" stop-color="#f0fcff"/><stop offset=".35" stop-color="#40b8f0"/><stop offset="1" stop-color="#0868a8"/></radialGradient><linearGradient id="rg2" x1="0" y1="0" x2="1" y2="1"><stop offset="0" stop-color="#c8ccd2"/><stop offset="1" stop-color="#f8f8f8"/></linearGradient></defs><circle cx="8" cy="8" r="7.3" fill="#f4f4f4" stroke="#8e8f8f" stroke-width="1.1"/><circle cx="8" cy="8" r="5" fill="url(#rg2)"/></svg><div class="t" style="left:1043.00px;top:224px;font-size:14px;line-height:14px;font-weight:400;color:#000;transform:scaleX(0.9438);transform-origin:0 0;">Write</div><div class="abs" style="left:1024px;top:253px;width:16px;height:16px;box-sizing:border-box;border:1px solid #8e8f8f;background:#fff"><div class="abs" style="left:1px;top:1px;width:12px;height:12px;border:1px solid #f4f4f4;box-sizing:border-box"></div><div class="abs" style="left:2px;top:2px;width:10px;height:10px;background:linear-gradient(135deg,#cbcfd5,#f6f6f6)"></div></div><div class="t" style="left:1042.35px;top:254px;font-size:14px;line-height:14px;font-weight:400;color:#000;transform:scaleX(0.9500);transform-origin:0 0;">Short stroke</div><div class="abs" style="left:1024px;top:277px;width:82px;height:24px;box-sizing:border-box;border:1px solid #abadb3;background:#fff"></div><div class="t" style="left:1027.50px;top:281px;font-size:14px;line-height:14px;font-weight:400;color:#6d6d6d;transform:scaleX(0.9000);transform-origin:0 0;">40</div><div class="abs" style="left:1085px;top:279px;width:19px;height:10px;box-sizing:border-box;border:1px solid #c4c4c4;background:#f0f0f0"></div><div class="abs" style="left:1085px;top:289px;width:19px;height:10px;box-sizing:border-box;border:1px solid #c4c4c4;background:#f0f0f0"></div><svg class="abs" style="left:1085px;top:279px" width="19" height="20" viewBox="0 0 19 20"><path d="M6 7h7l-3.5-3.5z M6 13h7l-3.5 3.5z" fill="#8a8a8a"/></svg><div class="t" style="left:1122.30px;top:282px;font-size:14px;line-height:14px;font-weight:400;color:#000;transform:scaleX(0.9412);transform-origin:0 0;">gB</div><div class="abs" style="left:1024px;top:313px;width:16px;height:16px;box-sizing:border-box;border:1px solid #8e8f8f;background:#fff"><div class="abs" style="left:1px;top:1px;width:12px;height:12px;border:1px solid #f4f4f4;box-sizing:border-box"></div><div class="abs" style="left:2px;top:2px;width:10px;height:10px;background:linear-gradient(135deg,#cbcfd5,#f6f6f6)"></div><svg class="abs" style="left:1px;top:1px" width="14" height="14" viewBox="0 0 14 14"><path d="M2.2 7.2l2.6 3.8 6.4-8.5" fill="none" stroke="#4a5f97" stroke-width="1.9"/></svg></div><div class="t" style="left:1044.20px;top:314px;font-size:14px;line-height:14px;font-weight:400;color:#000;transform:scaleX(0.9380);transform-origin:0 0;">Transfer rate</div><div class="t" style="left:1023.45px;top:336px;font-size:14px;line-height:14px;font-weight:400;color:#000;transform:scaleX(0.9455);transform-origin:0 0;">Minimum</div><div class="abs" style="left:1024px;top:353px;width:123px;height:19px;background:#000;box-sizing:border-box;border-top:1px solid #a0a0a0;border-left:1px solid #a0a0a0"></div><div class="t" style="left:1052.20px;top:355px;font-size:14px;line-height:14px;font-weight:700;color:#10c0ff;transform:scaleX(1.0375);transform-origin:0 0;">53.7 MB/s</div><div class="t" style="left:1023.45px;top:376px;font-size:14px;line-height:14px;font-weight:400;color:#000;transform:scaleX(0.9508);transform-origin:0 0;">Maximum</div><div class="abs" style="left:1024px;top:393px;width:123px;height:19px;background:#000;box-sizing:border-box;border-top:1px solid #a0a0a0;border-left:1px solid #a0a0a0"></div><div class="t" style="left:1048.55px;top:395px;font-size:14px;line-height:14px;font-weight:700;color:#10c0ff;transform:scaleX(1.0486);transform-origin:0 0;">116.1 MB/s</div><div class="t" style="left:1024.00px;top:414px;font-size:14px;line-height:14px;font-weight:400;color:#000;transform:scaleX(0.9808);transform-origin:0 0;">Average</div><div class="abs" style="left:1024px;top:431px;width:123px;height:19px;background:#000;box-sizing:border-box;border-top:1px solid #a0a0a0;border-left:1px solid #a0a0a0"></div><div class="t" style="left:1052.30px;top:433px;font-size:14px;line-height:14px;font-weight:700;color:#10c0ff;transform:scaleX(1.0406);transform-origin:0 0;">93.4 MB/s</div><div class="abs" style="left:1024px;top:467px;width:16px;height:16px;box-sizing:border-box;border:1px solid #8e8f8f;background:#fff"><div class="abs" style="left:1px;top:1px;width:12px;height:12px;border:1px solid #f4f4f4;box-sizing:border-box"></div><div class="abs" style="left:2px;top:2px;width:10px;height:10px;background:linear-gradient(135deg,#cbcfd5,#f6f6f6)"></div><svg class="abs" style="left:1px;top:1px" width="14" height="14" viewBox="0 0 14 14"><path d="M2.2 7.2l2.6 3.8 6.4-8.5" fill="none" stroke="#4a5f97" stroke-width="1.9"/></svg></div><div class="t" style="left:1043.20px;top:468px;font-size:14px;line-height:14px;font-weight:400;color:#000;transform:scaleX(0.9587);transform-origin:0 0;">Access time</div><div class="abs" style="left:1024px;top:485px;width:123px;height:19px;background:#000;box-sizing:border-box;border-top:1px solid #a0a0a0;border-left:1px solid #a0a0a0"></div><div class="t" style="left:1060.69px;top:487px;font-size:14px;line-height:14px;font-weight:700;color:#ffff00;transform:scaleX(1.0100);transform-origin:0 0;">12.4 ms</div><div class="abs" style="left:1024px;top:509px;width:16px;height:16px;box-sizing:border-box;border:1px solid #8e8f8f;background:#fff"><div class="abs" style="left:1px;top:1px;width:12px;height:12px;border:1px solid #f4f4f4;box-sizing:border-box"></div><div class="abs" style="left:2px;top:2px;width:10px;height:10px;background:linear-gradient(135deg,#cbcfd5,#f6f6f6)"></div><svg class="abs" style="left:1px;top:1px" width="14" height="14" viewBox="0 0 14 14"><path d="M2.2 7.2l2.6 3.8 6.4-8.5" fill="none" stroke="#4a5f97" stroke-width="1.9"/></svg></div><div class="t" style="left:1042.59px;top:510px;font-size:14px;line-height:14px;font-weight:400;color:#000;transform:scaleX(0.9100);transform-origin:0 0;">Burst rate</div><div class="abs" style="left:1024px;top:527px;width:123px;height:19px;background:#000;box-sizing:border-box;border-top:1px solid #a0a0a0;border-left:1px solid #a0a0a0"></div><div class="t" style="left:1049.28px;top:529px;font-size:14px;line-height:14px;font-weight:700;color:#ffffff;transform:scaleX(1.0239);transform-origin:0 0;">167.5 MB/s</div><div class="t" style="left:1024.00px;top:550px;font-size:14px;line-height:14px;font-weight:400;color:#000;transform:scaleX(0.9592);transform-origin:0 0;">CPU usage</div><div class="abs" style="left:1024px;top:567px;width:123px;height:19px;background:#000;box-sizing:border-box;border-top:1px solid #a0a0a0;border-left:1px solid #a0a0a0"></div><div class="t" style="left:1068.90px;top:569px;font-size:14px;line-height:14px;font-weight:700;color:#ffffff;transform:scaleX(1.0406);transform-origin:0 0;">4.1%</div></body></html>
